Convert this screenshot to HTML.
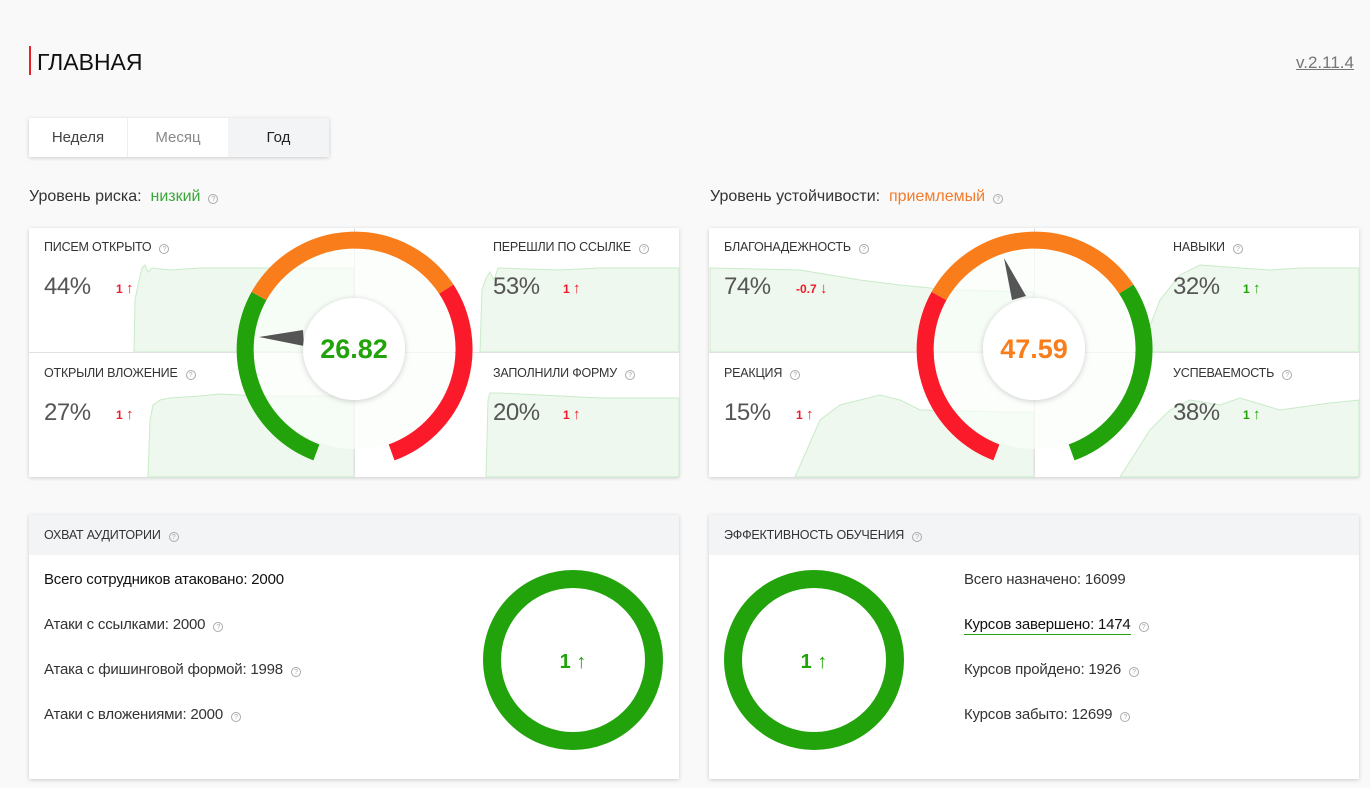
<!DOCTYPE html>
<html><head><meta charset="utf-8"><style>
*{margin:0;padding:0;box-sizing:border-box}
body{width:1370px;height:788px;background:#f9f9f9;font-family:"Liberation Sans",sans-serif;position:relative;overflow:hidden;color:#333}
.abs{position:absolute}
.card{position:absolute;background:#fff;box-shadow:0 1px 4px rgba(0,0,0,.18)}
.lbl{position:absolute;font-size:12.5px;color:#333;letter-spacing:-.2px;white-space:nowrap}
.q{display:inline-block;width:10px;height:10px;border:1px solid #aaa;border-radius:50%;font-size:7px;line-height:9px;text-align:center;color:#aaa;margin-left:8px;vertical-align:0px}
.pct{position:absolute;font-size:24px;color:#555;letter-spacing:-.5px}
.dl{position:absolute;font-size:12px;font-weight:bold}
.dl b{font-size:15px}
.r{color:#f0192b}.g{color:#22a30b}
.txt{position:absolute;font-size:15px;color:#333;white-space:nowrap;letter-spacing:-.2px}
</style></head><body>
<div class="abs" style="left:29px;top:46px;width:2px;height:29px;background:#e8202a"></div>
<div class="abs" style="left:37px;top:49px;font-size:23px;color:#111">ГЛАВНАЯ</div>
<div class="abs" style="left:1296px;top:53px;font-size:17px;color:#777;text-decoration:underline">v.2.11.4</div>
<div class="card" style="left:29px;top:118px;width:300px;height:39px;display:flex;font-size:15px">
<div style="width:99px;text-align:center;line-height:39px;color:#444;border-right:1px solid #eee">Неделя</div>
<div style="width:100px;text-align:center;line-height:39px;color:#888">Месяц</div>
<div style="width:101px;text-align:center;line-height:39px;color:#222;background:#f3f4f6">Год</div></div>
<div class="abs" style="left:29px;top:188px;font-size:16px;color:#333">Уровень риска:&nbsp; <span style="color:#3aa83a">низкий</span><span class="q">?</span></div>
<div class="abs" style="left:710px;top:188px;font-size:16px;color:#333">Уровень устойчивости:&nbsp; <span style="color:#f47b2b">приемлемый</span><span class="q">?</span></div>

<div class="card" style="left:29px;top:228px;width:650px;height:249px"></div>
<div class="card" style="left:709px;top:228px;width:650px;height:249px"></div>

<svg class="abs" style="left:0;top:0" width="1370" height="788">
<g fill="#eef8ee" stroke="#c9ebc9" stroke-width="1">
<path d="M134,352 L135,300 138,285 142,268 145,265 148,272 152,268 170,270 200,268 260,268 354,268 354,352Z"/>
<path d="M480,352 L482,290 486,278 490,272 494,280 498,268 560,270 600,268 679,268 679,352Z"/>
<path d="M148,477 L150,420 153,405 160,400 170,398 200,396 220,394 260,396 354,396 354,477Z"/>
<path d="M486,477 L488,400 490,393 500,393 540,395 600,398 679,398 679,477Z"/>
<path d="M710,352 L710,268 800,270 860,280 900,285 950,290 1034,292 1034,352Z"/>
<path d="M1140,352 L1160,300 1180,275 1200,265 1240,268 1270,270 1300,268 1359,268 1359,352Z"/>
<path d="M795,477 L820,420 840,405 880,395 900,400 920,410 1000,412 1034,412 1034,477Z"/>
<path d="M1120,477 L1150,430 1170,410 1190,400 1220,405 1240,398 1280,410 1330,403 1359,400 1359,477Z"/>
</g>
<g stroke="#e2e2e2" stroke-width="1">
<line x1="354.5" y1="228" x2="354.5" y2="477"/><line x1="29" y1="352.5" x2="679" y2="352.5"/>
<line x1="1034.5" y1="228" x2="1034.5" y2="477"/><line x1="709" y1="352.5" x2="1359" y2="352.5"/>
</g>
<defs><filter id="sh" x="-30%" y="-30%" width="160%" height="160%"><feDropShadow dx="0" dy="1" stdDeviation="3" flood-opacity=".2"/></filter></defs>
<g fill="none" stroke-width="17">
<circle cx="354" cy="349" r="100" fill="#fafdfa" stroke="none" opacity=".7"/>
<path d="M316.4,452.4 A110 110 0 0 1 259,296" stroke="#22a30b"/>
<path d="M259,296 A110 110 0 0 1 446.3,289.1" stroke="#f97e1b"/>
<path d="M446.3,289.1 A110 110 0 0 1 391.6,452.4" stroke="#fa1a2a"/>
<circle cx="1034" cy="349" r="100" fill="#fafdfa" stroke="none" opacity=".7"/>
<path d="M996.4,452.4 A110 110 0 0 1 939,296" stroke="#fa1a2a"/>
<path d="M939,296 A110 110 0 0 1 1126.3,289.1" stroke="#f97e1b"/>
<path d="M1126.3,289.1 A110 110 0 0 1 1071.6,452.4" stroke="#22a30b"/>
</g>
<polygon points="259,337 303,330 304,346" fill="#555"/>
<polygon points="1004,258 1012,300 1026,296" fill="#555"/>
<circle cx="354" cy="349" r="51" fill="#fff" filter="url(#sh)"/>
<circle cx="1034" cy="349" r="51" fill="#fff" filter="url(#sh)"/>
<text x="354" y="358" text-anchor="middle" font-family="Liberation Sans" font-weight="bold" font-size="27" fill="#22a30b">26.82</text>
<text x="1034" y="358" text-anchor="middle" font-family="Liberation Sans" font-weight="bold" font-size="27" fill="#f97e1b">47.59</text>
</svg>

<div class="lbl" style="left:44px;top:240px">ПИСЕМ ОТКРЫТО<span class="q">?</span></div>
<div class="pct" style="left:44px;top:273px">44%</div><div class="dl r" style="left:116px;top:280px">1 <b>↑</b></div>
<div class="lbl" style="left:493px;top:240px">ПЕРЕШЛИ ПО ССЫЛКЕ<span class="q">?</span></div>
<div class="pct" style="left:493px;top:273px">53%</div><div class="dl r" style="left:563px;top:280px">1 <b>↑</b></div>
<div class="lbl" style="left:44px;top:366px">ОТКРЫЛИ ВЛОЖЕНИЕ<span class="q">?</span></div>
<div class="pct" style="left:44px;top:399px">27%</div><div class="dl r" style="left:116px;top:406px">1 <b>↑</b></div>
<div class="lbl" style="left:493px;top:366px">ЗАПОЛНИЛИ ФОРМУ<span class="q">?</span></div>
<div class="pct" style="left:493px;top:399px">20%</div><div class="dl r" style="left:563px;top:406px">1 <b>↑</b></div>

<div class="lbl" style="left:724px;top:240px">БЛАГОНАДЕЖНОСТЬ<span class="q">?</span></div>
<div class="pct" style="left:724px;top:273px">74%</div><div class="dl r" style="left:796px;top:280px">-0.7 <b>↓</b></div>
<div class="lbl" style="left:1173px;top:240px">НАВЫКИ<span class="q">?</span></div>
<div class="pct" style="left:1173px;top:273px">32%</div><div class="dl g" style="left:1243px;top:280px">1 <b>↑</b></div>
<div class="lbl" style="left:724px;top:366px">РЕАКЦИЯ<span class="q">?</span></div>
<div class="pct" style="left:724px;top:399px">15%</div><div class="dl r" style="left:796px;top:406px">1 <b>↑</b></div>
<div class="lbl" style="left:1173px;top:366px">УСПЕВАЕМОСТЬ<span class="q">?</span></div>
<div class="pct" style="left:1173px;top:399px">38%</div><div class="dl g" style="left:1243px;top:406px">1 <b>↑</b></div>

<div class="card" style="left:29px;top:515px;width:650px;height:264px"><div style="height:40px;background:#f3f4f6"></div></div>
<div class="card" style="left:709px;top:515px;width:650px;height:264px"><div style="height:40px;background:#f3f4f6"></div></div>
<svg class="abs" style="left:0;top:0" width="1370" height="788">
<circle cx="573" cy="660" r="81" fill="none" stroke="#22a30b" stroke-width="18"/>
<circle cx="814" cy="660" r="81" fill="none" stroke="#22a30b" stroke-width="18"/>
<text x="573" y="668" text-anchor="middle" font-family="Liberation Sans" font-weight="bold" font-size="20" fill="#22a30b">1 ↑</text>
<text x="814" y="668" text-anchor="middle" font-family="Liberation Sans" font-weight="bold" font-size="20" fill="#22a30b">1 ↑</text>
</svg>
<div class="lbl" style="left:44px;top:528px">ОХВАТ АУДИТОРИИ<span class="q">?</span></div>
<div class="lbl" style="left:724px;top:528px">ЭФФЕКТИВНОСТЬ ОБУЧЕНИЯ<span class="q">?</span></div>
<div class="txt" style="left:44px;top:571px;color:#111">Всего сотрудников атаковано: 2000</div>
<div class="txt" style="left:44px;top:616px">Атаки с ссылками: 2000<span class="q">?</span></div>
<div class="txt" style="left:44px;top:661px">Атака с фишинговой формой: 1998<span class="q">?</span></div>
<div class="txt" style="left:44px;top:706px">Атаки с вложениями: 2000<span class="q">?</span></div>
<div class="txt" style="left:964px;top:571px">Всего назначено: 16099</div>
<div class="txt" style="left:964px;top:616px;color:#111"><span style="border-bottom:1px solid #22a30b;padding-bottom:1px">Курсов завершено: 1474</span><span class="q">?</span></div>
<div class="txt" style="left:964px;top:661px">Курсов пройдено: 1926<span class="q">?</span></div>
<div class="txt" style="left:964px;top:706px">Курсов забыто: 12699<span class="q">?</span></div>
</body></html>
